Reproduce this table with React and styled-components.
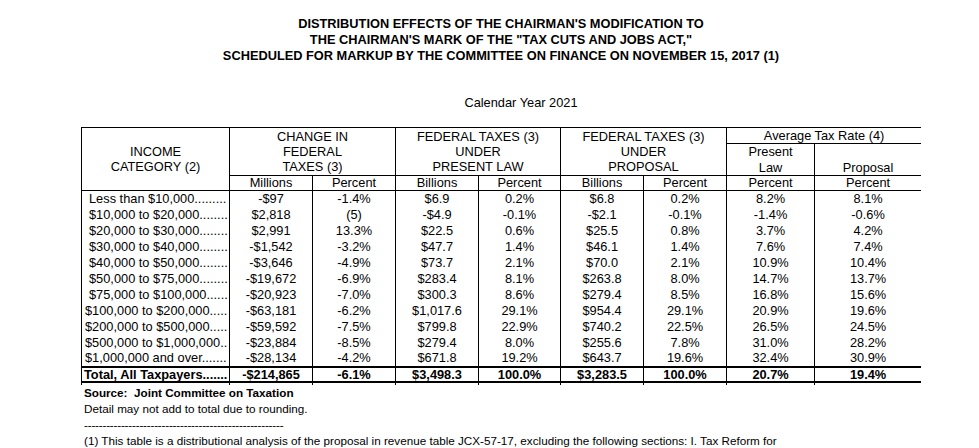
import React, { useMemo } from 'react';
import styled, { createGlobalStyle } from 'styled-components';

const GlobalStyle = createGlobalStyle`
  html, body {
    margin: 0;
    padding: 0;
    background: #fff;
  }
  body {
    font-family: "Liberation Sans", Arial, sans-serif;
    color: #000;
  }
`;

const rows = [
    ['Less than $10,000', '-$97', '-1.4%', '$6.9', '0.2%', '$6.8', '0.2%', '8.2%', '8.1%'],
    ['$10,000 to $20,000', '$2,818', '(5)', '-$4.9', '-0.1%', '-$2.1', '-0.1%', '-1.4%', '-0.6%'],
    ['$20,000 to $30,000', '$2,991', '13.3%', '$22.5', '0.6%', '$25.5', '0.8%', '3.7%', '4.2%'],
    ['$30,000 to $40,000', '-$1,542', '-3.2%', '$47.7', '1.4%', '$46.1', '1.4%', '7.6%', '7.4%'],
    ['$40,000 to $50,000', '-$3,646', '-4.9%', '$73.7', '2.1%', '$70.0', '2.1%', '10.9%', '10.4%'],
    ['$50,000 to $75,000', '-$19,672', '-6.9%', '$283.4', '8.1%', '$263.8', '8.0%', '14.7%', '13.7%'],
    ['$75,000 to $100,000', '-$20,923', '-7.0%', '$300.3', '8.6%', '$279.4', '8.5%', '16.8%', '15.6%'],
    ['$100,000 to $200,000', '-$63,181', '-6.2%', '$1,017.6', '29.1%', '$954.4', '29.1%', '20.9%', '19.6%'],
    ['$200,000 to $500,000', '-$59,592', '-7.5%', '$799.8', '22.9%', '$740.2', '22.5%', '26.5%', '24.5%'],
    ['$500,000 to $1,000,000', '-$23,884', '-8.5%', '$279.4', '8.0%', '$255.6', '7.8%', '31.0%', '28.2%'],
    ['$1,000,000 and over', '-$28,134', '-4.2%', '$671.8', '19.2%', '$643.7', '19.6%', '32.4%', '30.9%'],
];

const total = ['Total, All Taxpayers', '-$214,865', '-6.1%', '$3,498.3', '100.0%', '$3,283.5', '100.0%', '20.7%', '19.4%'];

const colWidths = [148, 83, 83, 83, 82, 83, 83, 88, 107];

// leader dots that fill the label column up to its right edge
const withLeader = (text, indent, bold) => {
    const ctx = document.createElement('canvas').getContext('2d');
    ctx.font = `${bold ? 'bold ' : ''}12.8px "Liberation Sans", Arial, sans-serif`;
    const room = colWidths[0] - 1 - indent - ctx.measureText(text).width;
    const n = Math.max(0, Math.floor(room / ctx.measureText('.').width));
    return text + '.'.repeat(n);
};

const App = () => {
    const labels = useMemo(() => rows.map((r, i) => withLeader(r[0], i < 7 ? 7 : 3, false)), []);
    const totalLabel = useMemo(() => withLeader(total[0], 2, true), []);

    return (
        <Page>
            <GlobalStyle />
            <Title>
                DISTRIBUTION EFFECTS OF THE CHAIRMAN'S MODIFICATION TO<br />
                THE CHAIRMAN'S MARK OF THE "TAX CUTS AND JOBS ACT,"<br />
                SCHEDULED FOR MARKUP BY THE COMMITTEE ON FINANCE ON NOVEMBER 15, 2017 (1)
            </Title>
            <Year>Calendar Year 2021</Year>
            <Table>
                <colgroup>
                    {colWidths.map((w, i) => <col key={i} style={{ width: w }} />)}
                </colgroup>
                <thead>
                    <tr>
                        <HeadCell rowSpan={3}>INCOME<br />CATEGORY (2)</HeadCell>
                        <HeadCell colSpan={2} rowSpan={2}>CHANGE IN<br />FEDERAL<br />TAXES (3)</HeadCell>
                        <HeadCell colSpan={2} rowSpan={2}>FEDERAL TAXES (3)<br />UNDER<br />PRESENT LAW</HeadCell>
                        <HeadCell colSpan={2} rowSpan={2}>FEDERAL TAXES (3)<br />UNDER<br />PROPOSAL</HeadCell>
                        <HeadCell colSpan={2}>Average Tax Rate (4)</HeadCell>
                    </tr>
                    <tr>
                        <HeadCell>Present<br />Law</HeadCell>
                        <HeadCell $bottom>Proposal</HeadCell>
                    </tr>
                    <tr>
                        <UnitCell>Millions</UnitCell>
                        <UnitCell>Percent</UnitCell>
                        <UnitCell>Billions</UnitCell>
                        <UnitCell>Percent</UnitCell>
                        <UnitCell>Billions</UnitCell>
                        <UnitCell>Percent</UnitCell>
                        <UnitCell>Percent</UnitCell>
                        <UnitCell>Percent</UnitCell>
                    </tr>
                </thead>
                <tbody>
                    {rows.map((r, i) => (
                        <tr key={i}>
                            <LabelCell>
                                <Label $indent={i < 7 ? 7 : 3}>{labels[i]}</Label>
                            </LabelCell>
                            {r.slice(1).map((v, j) => <ValueCell key={j}>{v}</ValueCell>)}
                        </tr>
                    ))}
                    <TotalRow>
                        <LabelCell>
                            <Label $indent={2}>{totalLabel}</Label>
                        </LabelCell>
                        {total.slice(1).map((v, j) => <ValueCell key={j}>{v}</ValueCell>)}
                    </TotalRow>
                    <tr>
                        {colWidths.map((w, i) => <TailCell key={i} />)}
                    </tr>
                </tbody>
            </Table>
            <Notes>
                <Source>Source:&nbsp; Joint Committee on Taxation</Source>
                <div>Detail may not add to total due to rounding.</div>
                <Rule>{'-'.repeat(54)}</Rule>
                <div>(1) This table is a distributional analysis of the proposal in revenue table JCX-57-17, excluding the following sections: I. Tax Reform for</div>
            </Notes>
        </Page>
    );
};

export default App;

const Page = styled.div`
  width: 840px;
  margin-left: 81px;
  padding-top: 16px;
  height: 448px;
  overflow: hidden;
  box-sizing: border-box;
`;

const Title = styled.div`
  text-align: center;
  font-weight: bold;
  font-size: 12.8px;
  line-height: 16px;
`;

const Year = styled.div`
  margin-top: 31px;
  padding-left: 40px;
  text-align: center;
  font-size: 12.8px;
  line-height: 16px;
`;

const Table = styled.table`
  margin-top: 16px;
  width: 841px;
  table-layout: fixed;
  border-collapse: collapse;
  font-size: 12.8px;
`;

const HeadCell = styled.th`
  font-weight: normal;
  text-align: center;
  vertical-align: ${p => (p.$bottom ? 'bottom' : 'middle')};
  padding: 0;
  line-height: 15.3px;
  border: 1px solid #000;
`;

const UnitCell = styled.th`
  font-weight: normal;
  text-align: center;
  padding: 0;
  line-height: 14.5px;
  border: 1px solid #000;
`;

const TotalRow = styled.tr`
  font-weight: bold;
  td {
    line-height: 13px;
    border-top: 2px solid #000;
    border-bottom: 2px solid #000;
  }
`;

const LabelCell = styled.td`
  padding: 0;
  line-height: 15.9px;
  border-left: 1px solid #000;
  border-right: 1px solid #000;
`;

const Label = styled.div`
  padding-left: ${p => p.$indent}px;
  overflow: hidden;
  white-space: nowrap;
`;

const ValueCell = styled.td`
  padding: 0;
  line-height: 15.9px;
  text-align: center;
  white-space: nowrap;
  border-left: 1px solid #000;
  border-right: 1px solid #000;
`;

const TailCell = styled.td`
  padding: 0;
  height: 2px;
  line-height: 0;
  border-left: 1px solid #000;
  border-right: 1px solid #000;
`;

const Notes = styled.div`
  padding-left: 3px;
  font-size: 11.7px;
  line-height: 16px;
`;

const Source = styled.div`
  font-weight: bold;
`;

const Rule = styled.div`
  letter-spacing: -0.2px;
  overflow: hidden;
  white-space: nowrap;
  width: 210px;
`;
